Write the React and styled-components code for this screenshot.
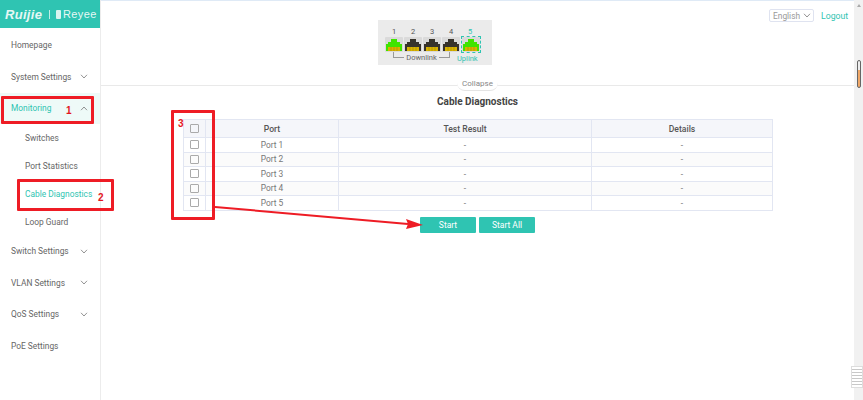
import React from 'react'
import styled, { createGlobalStyle } from 'styled-components'

const teal = '#2fc4b2'

const GlobalStyle = createGlobalStyle`
  html, body { margin: 0; padding: 0; background: #fff; }
  body { font-family: Roboto, "Noto Sans", sans-serif; overflow: hidden; }
`

const menu = [
  { label: 'Homepage' },
  { label: 'System Settings', arrow: 'down' },
  { label: 'Monitoring', arrow: 'up', open: true },
  { label: 'Switches', sub: true },
  { label: 'Port Statistics', sub: true },
  { label: 'Cable Diagnostics', sub: true, active: true },
  { label: 'Loop Guard', sub: true },
  { label: 'Switch Settings', arrow: 'down' },
  { label: 'VLAN Settings', arrow: 'down' },
  { label: 'QoS Settings', arrow: 'down' },
  { label: 'PoE Settings' },
]

const Chevron = ({ up }) => (
  <ChevronSvg viewBox="0 0 8 5">
    <path d={up ? 'M1 4.2 4 1l3 3.2' : 'M1 .8 4 4l3-3.2'} fill="none" stroke="#777" strokeWidth="0.8" />
  </ChevronSvg>
)

const PortIcon = ({ on, uplink }) => (
  <PortBox $uplink={uplink}>
    <svg width="18" height="15" viewBox="0 0 18 15">
      <rect width="18" height="15" fill="#dadada" rx="1" />
      <path d="M1 14V7h2V5h3V2h6v3h3v2h2v7z" fill={on ? '#3fe400' : '#37332c'} />
      <rect x="3" y="10" width="12" height="4" fill="#d9b300" />
      <path d="M6 10v4M9 10v4M12 10v4" stroke="#9a8500" strokeWidth="0.5" />
    </svg>
  </PortBox>
)

const Logo = () => (
  <LogoRow>
    <LogoMain>Ruijie</LogoMain>
    <LogoBar />
    <svg width="5" height="9" viewBox="0 0 5 9"><rect width="5" height="9" fill="#d9f4f0" rx="1" /></svg>
    <LogoSub>Reyee</LogoSub>
  </LogoRow>
)

export default function App() {
  return (
    <Page>
      <GlobalStyle />
      <Sidebar>
        <LogoBand><Logo /></LogoBand>
        <Menu>
          {menu.map((m) => (
            <MenuItem key={m.label} $sub={m.sub} $open={m.open} $active={m.active || m.open}>
              <span>{m.label}</span>
              {m.arrow && <Chevron up={m.arrow === 'up'} />}
            </MenuItem>
          ))}
        </Menu>
      </Sidebar>

      <Main>
        <TopArea>
          <DevicePanel>
            <PortNumbers>
              {[1, 2, 3, 4, 5].map((n) => <PortNumber key={n} $uplink={n === 5}>{n}</PortNumber>)}
            </PortNumbers>
            <Ports>
              <PortIcon on />
              <PortIcon />
              <PortIcon />
              <PortIcon />
              <PortIcon on uplink />
            </Ports>
            <PortLabels>
              <Downlink><span>Downlink</span></Downlink>
              <Uplink>Uplink</Uplink>
            </PortLabels>
          </DevicePanel>
          <TopRight>
            <LangSelect>
              <span>English</span>
              <Chevron />
            </LangSelect>
            <Logout>Logout</Logout>
          </TopRight>
        </TopArea>

        <CollapseLine><CollapseTab>Collapse</CollapseTab></CollapseLine>
        <Title>Cable Diagnostics</Title>

        <TableWrap>
          <Table>
            <colgroup>
              <col width="22" /><col width="133" /><col width="253" /><col width="181" />
            </colgroup>
            <thead>
              <tr>
                <Th><Check /></Th>
                <Th>Port</Th>
                <Th>Test Result</Th>
                <Th>Details</Th>
              </tr>
            </thead>
            <tbody>
              {[1, 2, 3, 4, 5].map((n) => (
                <Row key={n} $even={n % 2 === 0}>
                  <Td><Check /></Td>
                  <Td>Port {n}</Td>
                  <Td>-</Td>
                  <Td>-</Td>
                </Row>
              ))}
            </tbody>
          </Table>
        </TableWrap>

        <Buttons>
          <Button>Start</Button>
          <Button>Start All</Button>
        </Buttons>
      </Main>

      <Scrollbar>
        <ScrollArrow />
        <ScrollThumb />
      </Scrollbar>
      <DocPreview />

      {/* red annotations drawn over the screenshot */}
      <RedBox $x={1} $y={96} $w={93} $h={28} />
      <RedBox $x={17} $y={179} $w={97} $h={32} />
      <RedBox $x={171} $y={110} $w={44} $h={110} />
      <RedNum $x={66} $y={105}>1</RedNum>
      <RedNum $x={98} $y={192}>2</RedNum>
      <RedNum $x={178} $y={118}>3</RedNum>
      <ArrowSvg viewBox="0 0 863 400">
        <path d="M215 207 408 224" stroke="#ee1c25" strokeWidth="2" fill="none" />
        <path d="M423 225 406 219l2 5-2 5z" fill="#ee1c25" />
      </ArrowSvg>
    </Page>
  )
}

const Page = styled.div`
  position: relative;
  display: flex;
  width: 863px;
  height: 400px;
  overflow: hidden;
  font-size: 8.4px;
  color: #666;
`

const Sidebar = styled.aside`
  width: 100px;
  flex: none;
  border-right: 1px solid #ececec;
`

const LogoBand = styled.div`
  height: 28px;
  background: ${teal};
  display: flex;
  align-items: center;
  padding-left: 5px;
`

const LogoRow = styled.div`
  display: flex;
  align-items: center;
  gap: 2px;
  color: #e6f8f5;
`

const LogoMain = styled.span`
  width: 39px;
  font: italic 700 13px "Liberation Sans", sans-serif;
  letter-spacing: 0.3px;
`

const LogoBar = styled.i`
  width: 1px;
  height: 9px;
  margin: 0 4px 0 3px;
  background: #bfeee7;
`

const LogoSub = styled.span`
  font: 400 11px "Liberation Sans", sans-serif;
  letter-spacing: 0.4px;
`

const Menu = styled.nav`
  display: flex;
  flex-direction: column;
  padding-top: 1.5px;
`

const MenuItem = styled.div`
  display: flex;
  align-items: center;
  justify-content: space-between;
  height: ${(p) => (p.$sub ? '27.9px' : '31.5px')};
  padding: ${(p) => (p.$sub ? '0 12px 0 25px' : '0 12px 0 11px')};
  color: ${(p) => (p.$active ? teal : '#666')};
  background: ${(p) => (p.$open ? '#eefaf8' : 'transparent')};
  white-space: nowrap;
`

const ChevronSvg = styled.svg`
  width: 8px;
  height: 5px;
  flex: none;
`

const Main = styled.main`
  flex: 1;
  min-width: 0;
  display: flex;
  flex-direction: column;
  border-top: 1px solid #dfeaf6;
`

const TopArea = styled.div`
  height: 84px;
  flex: none;
  display: flex;
  align-items: flex-start;
  padding: 19px 6px 0 277px;
  box-sizing: border-box;
`

const DevicePanel = styled.div`
  width: 114px;
  height: 45px;
  background: #ebebeb;
  padding: 7px 0 0 7px;
  box-sizing: border-box;
`

const PortNumbers = styled.div`
  display: flex;
  gap: 1px;
  height: 10px;
  line-height: 9px;
  font-size: 7.5px;
`

const PortNumber = styled.span`
  width: 18px;
  text-align: center;
  color: ${(p) => (p.$uplink ? teal : '#555')};
`

const Ports = styled.div`
  display: flex;
  gap: 1px;
`

const PortBox = styled.div`
  width: 18px;
  height: 15px;
  margin-left: ${(p) => (p.$uplink ? '1px' : '0')};
  outline: ${(p) => (p.$uplink ? `1px dashed ${teal}` : 'none')};
`

const PortLabels = styled.div`
  display: flex;
  font-size: 7.5px;
  line-height: 9px;
`

const Downlink = styled.div`
  width: 57px;
  margin-left: 8px;
  height: 6px;
  border: 1px solid #999;
  border-top: none;
  text-align: center;
  box-sizing: border-box;

  span {
    position: relative;
    top: 1px;
    padding: 0 2px;
    background: #ebebeb;
    color: #666;
  }
`

const Uplink = styled.span`
  margin-left: 7px;
  margin-top: 2px;
  color: ${teal};
`

const TopRight = styled.div`
  margin-left: auto;
  display: flex;
  align-items: center;
  gap: 7px;
  margin-top: -11px;
`

const LangSelect = styled.div`
  width: 45px;
  height: 13px;
  box-sizing: border-box;
  border: 1px solid #dfe3f0;
  border-radius: 2px;
  display: flex;
  align-items: center;
  justify-content: space-between;
  padding: 0 2px 0 3px;
  color: #999;
`

const Logout = styled.a`
  width: 27px;
  color: ${teal};
  font-size: 8.7px;
`

const CollapseLine = styled.div`
  height: 1px;
  background: #e9e9e9;
  display: flex;
  justify-content: center;
`

const CollapseTab = styled.div`
  height: 9px;
  margin-top: -5px;
  padding: 0 5px 1px;
  background: #fff;
  border-radius: 0 0 8px 8px;
  border-bottom: 1px solid #e4e4e4;
  font-size: 8px;
  line-height: 8px;
  color: #888;
`

const Title = styled.h2`
  margin: 10px 0 0;
  height: 23px;
  text-align: center;
  font-size: 10px;
  line-height: 12px;
  font-weight: 700;
  color: #444;
`

const TableWrap = styled.div`
  padding-left: 82px;
`

const Table = styled.table`
  width: 589px;
  table-layout: fixed;
  border-collapse: collapse;
`

const Th = styled.th`
  box-sizing: border-box;
  height: 18px;
  padding: 0;
  background: #f5f6fa;
  border: 1px solid #e2e6f2;
  font-size: 8.6px;
  font-weight: 500;
  color: #555;
  text-align: center;
`

const Row = styled.tr`
  background: ${(p) => (p.$even ? '#fbfbfb' : '#fff')};
`

const Td = styled.td`
  box-sizing: border-box;
  height: 14.5px;
  padding: 0;
  border: 1px solid #e2e6f2;
  text-align: center;
  line-height: 12px;
  color: #777;
`

const Check = styled.span`
  display: block;
  width: 7px;
  height: 7px;
  margin: 0 auto;
  border: 1px solid #aaa;
  border-radius: 1px;
`

const Buttons = styled.div`
  display: flex;
  gap: 3px;
  padding: 6px 0 0 319px;
`

const Button = styled.button`
  width: 56px;
  height: 16px;
  padding: 0;
  border: none;
  border-radius: 1px;
  background: ${teal};
  color: #fff;
  font: inherit;
  font-size: 8.5px;
`

const Scrollbar = styled.div`
  width: 9px;
  flex: none;
  background: #f1f1f1;
  display: flex;
  flex-direction: column;
  align-items: center;
`

const ScrollArrow = styled.i`
  margin-top: 4px;
  border: 2.5px solid transparent;
  border-top: none;
  border-bottom: 3px solid #aaa;
`

const ScrollThumb = styled.div`
  width: 4px;
  height: 28px;
  margin-top: 53px;
  box-sizing: border-box;
  border: 1px solid #666;
  border-radius: 2px;
  background: linear-gradient(#eee 35%, #f0a868 35%);
`

const DocPreview = styled.div`
  position: absolute;
  right: 0;
  top: 366px;
  width: 12px;
  height: 22px;
  box-sizing: border-box;
  background: repeating-linear-gradient(#fff 0 2px, #c8c8c8 2px 3px);
  border: 1px solid #ddd;
`

const RedBox = styled.div`
  position: absolute;
  left: ${(p) => p.$x}px;
  top: ${(p) => p.$y}px;
  width: ${(p) => p.$w}px;
  height: ${(p) => p.$h}px;
  box-sizing: border-box;
  border: 3px solid #ee1c25;
  border-radius: 1px;
`

const RedNum = styled.span`
  position: absolute;
  left: ${(p) => p.$x}px;
  top: ${(p) => p.$y}px;
  font: 700 10px/12px "Liberation Sans", sans-serif;
  color: #e3161e;
`

const ArrowSvg = styled.svg`
  position: absolute;
  inset: 0;
  width: 863px;
  height: 400px;
  pointer-events: none;
`
